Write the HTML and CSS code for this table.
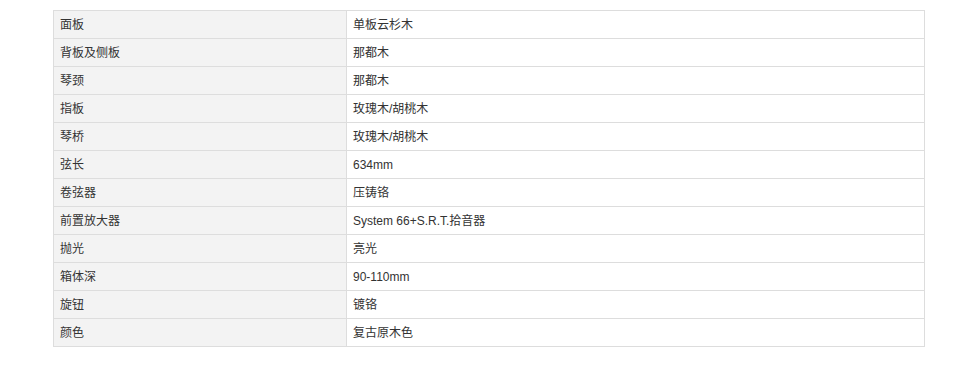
FILE: index.html
```html
<!DOCTYPE html>
<html lang="zh">
<head>
<meta charset="utf-8">
<link rel="stylesheet" href="styles.css">
</head>
<body>
<div class="wrap">
<table class="spec">
<tbody>
<tr><td class="k">面板</td><td class="v">单板云杉木</td></tr>
<tr><td class="k">背板及侧板</td><td class="v">那都木</td></tr>
<tr><td class="k">琴颈</td><td class="v">那都木</td></tr>
<tr><td class="k">指板</td><td class="v">玫瑰木/胡桃木</td></tr>
<tr><td class="k">琴桥</td><td class="v">玫瑰木/胡桃木</td></tr>
<tr><td class="k">弦长</td><td class="v">634mm</td></tr>
<tr><td class="k">卷弦器</td><td class="v">压铸铬</td></tr>
<tr><td class="k">前置放大器</td><td class="v">System 66+S.R.T.拾音器</td></tr>
<tr><td class="k">抛光</td><td class="v">亮光</td></tr>
<tr><td class="k">箱体深</td><td class="v">90-110mm</td></tr>
<tr><td class="k">旋钮</td><td class="v">镀铬</td></tr>
<tr><td class="k">颜色</td><td class="v">复古原木色</td></tr>
</tbody>
</table>
</div>
</body>
</html>
```
FILE: styles.css
```css
html, body {
  margin: 0;
  padding: 0;
  background: #fff;
}
.wrap {
  padding: 10px 0 0 53px;
}
.spec {
  border-collapse: collapse;
  width: 872px;
  table-layout: fixed;
  font-family: Arial, "Liberation Sans", "Noto Sans CJK SC", sans-serif;
  font-size: 12px;
  color: #333;
}
.spec td {
  border: 1px solid #ddd;
  height: 28px;
  padding: 0 6px;
  box-sizing: border-box;
  vertical-align: middle;
  line-height: 16px;
}
.spec .k {
  width: 293px;
  background: #f3f3f3;
}
.spec .v {
  background: #fff;
}
```
